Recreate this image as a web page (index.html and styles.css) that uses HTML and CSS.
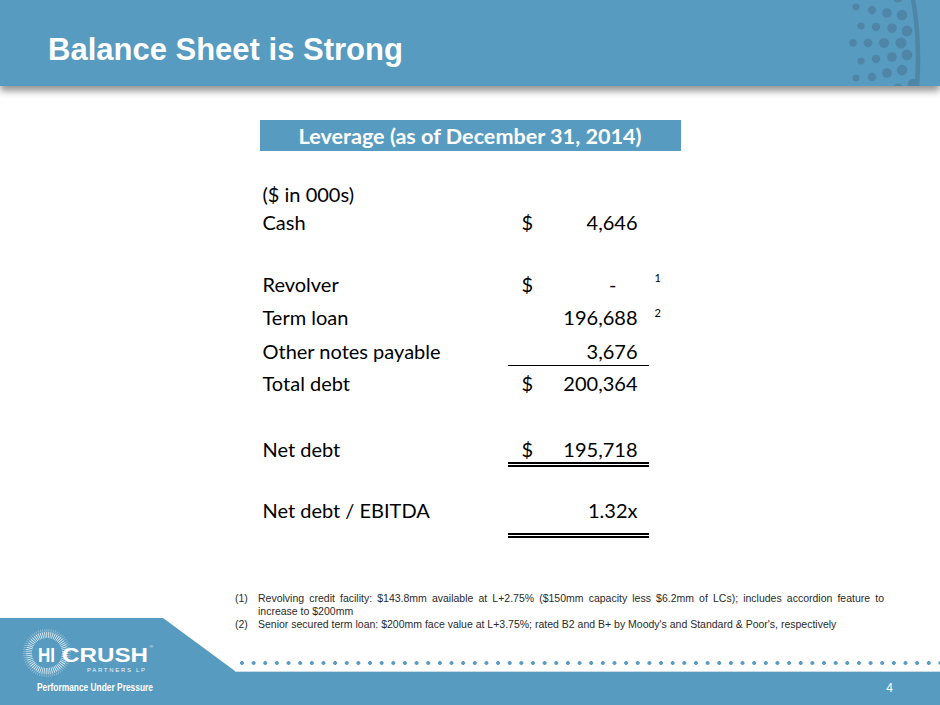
FILE: index.html
```html
<!DOCTYPE html>
<html lang="en">
<head>
<meta charset="utf-8">
<title>Balance Sheet is Strong</title>
<link rel="stylesheet" href="styles.css">
</head>
<body>
<div class="slide">
  <header class="hdr">
    <h1 class="hdr-title">Balance Sheet is Strong</h1>
    <svg class="hdr-dots" width="100" height="86" viewBox="840 0 100 86" aria-hidden="true">
      <g fill="#4f86a8">
        <circle cx="856" cy="7" r="3.6"/><circle cx="872" cy="10" r="4.2"/><circle cx="887" cy="13" r="4.8"/><circle cx="902" cy="15" r="5.3"/>
        <circle cx="898" cy="-2" r="4.6"/>
        <circle cx="861" cy="26" r="3.6"/><circle cx="876" cy="27" r="4.2"/><circle cx="892" cy="28" r="4.8"/><circle cx="907" cy="31" r="5.4"/>
        <circle cx="853" cy="43" r="3.8"/><circle cx="868" cy="43" r="4.4"/><circle cx="884" cy="43" r="5"/><circle cx="901" cy="43" r="5.5"/>
        <circle cx="861" cy="61" r="3.6"/><circle cx="876" cy="59" r="4.2"/><circle cx="892" cy="57" r="4.8"/><circle cx="907" cy="55" r="5.4"/>
        <circle cx="856" cy="78" r="3.6"/><circle cx="872" cy="77" r="4.2"/><circle cx="887" cy="73" r="4.8"/><circle cx="902" cy="70" r="5.3"/>
        <circle cx="898" cy="88" r="4.6"/><circle cx="913" cy="84" r="5.2"/>
      </g>
      <path d="M913 0 C918 25 919 60 917 86" fill="none" stroke="#4f86a8" stroke-width="4.5"/>
    </svg>
  </header>

  <main class="content">
    <section class="panel">
      <div class="panel-title">Leverage (as of December 31, 2014)</div>
      <div class="tbl">
        <div class="row r-units"><span class="lbl">($ in 000s)</span></div>
        <div class="row r-cash"><span class="lbl">Cash</span><span class="amt"><span class="cur">$</span><span class="val">4,646</span></span></div>
        <div class="row r-rev"><span class="lbl">Revolver</span><span class="amt"><span class="cur">$</span><span class="val val-dash">-</span></span><span class="fn"><sup class="fnref fnref-1">1</sup></span></div>
        <div class="row r-term"><span class="lbl">Term loan</span><span class="amt"><span class="cur"></span><span class="val">196,688</span></span><span class="fn"><sup class="fnref fnref-2">2</sup></span></div>
        <div class="row r-other"><span class="lbl">Other notes payable</span><span class="amt amt-line"><span class="cur"></span><span class="val">3,676</span></span></div>
        <div class="row r-total"><span class="lbl">Total debt</span><span class="amt"><span class="cur">$</span><span class="val">200,364</span></span></div>
        <div class="row r-net"><span class="lbl">Net debt</span><span class="amt amt-dbl amt-net"><span class="cur">$</span><span class="val">195,718</span></span></div>
        <div class="row r-ratio"><span class="lbl">Net debt / EBITDA</span><span class="amt amt-dbl amt-ratio"><span class="cur"></span><span class="val">1.32x</span></span></div>
      </div>
    </section>

    <ol class="notes">
      <li class="note"><span class="note-num">(1)</span><span class="note-text"><span class="note-just">Revolving credit facility: $143.8mm available at L+2.75% ($150mm capacity less $6.2mm of LCs); includes accordion feature to</span><span class="note-line">increase to $200mm</span></span></li>
      <li class="note"><span class="note-num">(2)</span><span class="note-text">Senior secured term loan: $200mm face value at L+3.75%; rated B2 and B+ by Moody's and Standard &amp; Poor's, respectively</span></li>
    </ol>
  </main>

  <footer class="ftr">
    <div class="ftr-tab">
      <svg class="logo" width="215" height="70" viewBox="0 0 215 70" aria-label="Hi-Crush Partners LP">
        <circle cx="32" cy="28" r="22.5" fill="none" stroke="#ffffff" stroke-width="3" stroke-dasharray="0.6 1.5" opacity="0.45"/>
        <circle cx="32" cy="28" r="18" fill="none" stroke="#ffffff" stroke-width="6" stroke-dasharray="0.8 1.1" opacity="0.85"/>
        <text class="logo-hi" x="23" y="37" textLength="17" lengthAdjust="spacingAndGlyphs">HI</text>
        <text class="logo-crush" x="47" y="37" textLength="86" lengthAdjust="spacingAndGlyphs">CRUSH</text>
        <text class="logo-reg" x="135" y="23">®</text>
        <text class="logo-partners" x="72" y="47" textLength="58" lengthAdjust="spacing">PARTNERS LP</text>
        <text class="logo-tag" x="22" y="66" textLength="116" lengthAdjust="spacingAndGlyphs">Performance Under Pressure</text>
      </svg>
    </div>
    <div class="ftr-right">
      <div class="ftr-dots"></div>
      <div class="ftr-band"><span class="pgnum">4</span></div>
    </div>
  </footer>
</div>
</body>
</html>
```

FILE: styles.css
```css
* { box-sizing: border-box; }

html, body {
  margin: 0;
  padding: 0;
  background: #ffffff;
}

.slide {
  width: 940px;
  height: 705px;
  overflow: hidden;
  display: flex;
  flex-direction: column;
  background: #ffffff;
  font-family: "Liberation Sans", Arial, sans-serif;
}

/* Header */
.hdr {
  position: relative;
  z-index: 1;
  flex: 0 0 86px;
  height: 86px;
  display: flex;
  align-items: flex-start;
  justify-content: space-between;
  background: #579bc0;
  box-shadow: 0 5px 7px rgba(0, 0, 0, 0.42);
}

.hdr-title {
  margin: 0;
  padding: 32px 0 0 48px;
  font-family: "Liberation Sans", Arial, sans-serif;
  font-weight: bold;
  font-size: 31px;
  line-height: 36px;
  color: #ffffff;
}

.hdr-dots {
  display: block;
  flex: 0 0 100px;
}

/* Main content */
.content {
  flex: 1 1 0;
  min-height: 0;
  display: flex;
  flex-direction: column;
}

.panel {
  width: 421px;
  margin: 34px auto 0;
}

.panel-title {
  height: 31px;
  background: #579bc0;
  color: #ffffff;
  text-align: center;
  font-family: Lato, "Open Sans", sans-serif;
  font-weight: bold;
  font-size: 21.6px;
  line-height: 33px;
}

.tbl {
  margin-left: 3px;
  padding-top: 27px;
  font-family: Lato, "Open Sans", sans-serif;
  font-size: 20px;
  line-height: 32px;
  color: #000000;
}

.row {
  display: flex;
  align-items: flex-start;
}

.r-units { height: 28px; }
.r-cash  { height: 62px; }
.r-rev   { height: 33px; }
.r-term  { height: 34px; }
.r-other { height: 32px; }
.r-total { height: 66px; }
.r-net   { height: 61px; }
.r-ratio { height: 44px; }

.lbl {
  flex: 0 0 245px;
  white-space: nowrap;
}

.amt {
  flex: 0 0 141px;
  height: 32px;
  display: flex;
  justify-content: space-between;
  padding: 0 11px 0 14px;
  white-space: nowrap;
}

.amt-line {
  height: 31px;
  border-bottom: 1.3px solid #000000;
}

.amt-dbl {
  border-bottom: 5px double #000000;
}

.amt-net { height: 34px; }
.amt-ratio { height: 44px; }

.val-dash {
  margin-right: 21px;
}

.fn {
  padding-left: 6px;
}

.fnref {
  font-size: 11px;
  line-height: 1;
  color: #000000;
}

.fnref-1 { vertical-align: 10px; }
.fnref-2 { vertical-align: 8px; }

/* Footnotes */
.notes {
  flex: 0 0 auto;
  list-style: none;
  margin: 54px 0 0 235px;
  padding: 0;
  width: 649px;
  font-family: "Liberation Sans", Arial, sans-serif;
  font-size: 10.5px;
  line-height: 13px;
  color: #2a2a2a;
}

.note {
  display: grid;
  grid-template-columns: 23px 1fr;
}

.note-just {
  display: block;
  text-align: justify;
  text-align-last: justify;
}

.note-line {
  display: block;
}

/* Footer */
.ftr {
  flex: 0 0 87px;
  height: 87px;
  display: flex;
}

.ftr-tab {
  flex: 0 0 235px;
  background: #579bc0;
  clip-path: polygon(0 0, 163px 0, 235px 53px, 235px 100%, 0 100%);
  padding: 7px 0 0 15px;
}

.logo {
  display: block;
}

.logo text {
  fill: #ffffff;
  font-family: "Liberation Sans", Arial, sans-serif;
}

.logo-hi, .logo-crush {
  font-weight: bold;
  font-size: 21px;
}

.logo-reg {
  font-size: 4px;
}

.logo-partners {
  font-size: 6px;
  opacity: 0.9;
}

.logo-tag {
  font-family: "DejaVu Sans Condensed", "Liberation Sans", sans-serif;
  font-weight: bold;
  font-size: 10.5px;
}

.ftr-right {
  flex: 1 1 auto;
  display: flex;
  flex-direction: column;
}

.ftr-dots {
  flex: 0 0 53px;
  background-image: radial-gradient(circle, #5a9cc1 1.6px, rgba(90, 156, 193, 0) 2.2px);
  background-size: 11.65px 6px;
  background-position: 1.17px 42px;
  background-repeat: repeat-x;
}

.ftr-band {
  flex: 1 1 auto;
  display: flex;
  justify-content: flex-end;
  padding-right: 47px;
  background: #579bc0;
  border-top: 1px solid #c9dbe6;
}

.pgnum {
  font-family: "Liberation Sans", Arial, sans-serif;
  font-size: 12px;
  line-height: 32px;
  color: #ffffff;
}
```
